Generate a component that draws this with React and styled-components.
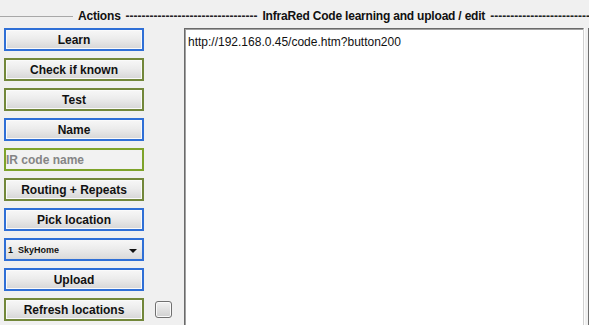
import React from 'react';
import styled, { createGlobalStyle } from 'styled-components';

const GlobalStyle = createGlobalStyle`
    html, body {
        margin: 0;
        padding: 0;
        background: #f0f0f0;
        overflow: hidden;
    }
    body {
        font-family: "Liberation Sans", Arial, sans-serif;
    }
`;

const actions = [
    { label: 'Learn', tone: 'blue' },
    { label: 'Check if known', tone: 'olive' },
    { label: 'Test', tone: 'olive' },
    { label: 'Name', tone: 'blue' },
];

const actions2 = [
    { label: 'Routing + Repeats', tone: 'olive' },
    { label: 'Pick location', tone: 'blue' },
];

const tones = {
    blue: '#2f6fd6',
    olive: '#72873a',
    green: '#7ea32a',
};

function App() {
    return (
        <Page>
            <GlobalStyle />
            <Header>
                <HeadLine />
                <HeadLabel>Actions</HeadLabel>
                <Dashes>{'-'.repeat(33)}</Dashes>
                <HeadLabel>InfraRed Code learning and upload / edit</HeadLabel>
                <Dashes>{'-'.repeat(25)}</Dashes>
            </Header>
            <Body>
                <Sidebar>
                    {actions.map(a => (
                        <Button key={a.label} tone={a.tone}>{a.label}</Button>
                    ))}
                    <NameInput placeholder="IR code name" />
                    {actions2.map(a => (
                        <Button key={a.label} tone={a.tone}>{a.label}</Button>
                    ))}
                    <Select tone="blue">
                        <span>1&nbsp; SkyHome</span>
                        <Arrow />
                    </Select>
                    <Button tone="blue">Upload</Button>
                    <Row>
                        <Button tone="olive">Refresh locations</Button>
                        <CheckBox />
                    </Row>
                </Sidebar>
                <Editor defaultValue="http://192.168.0.45/code.htm?button200" spellCheck={false} />
                <Edge />
            </Body>
        </Page>
    );
}

export default App;

const Page = styled.div`
    width: 589px;
    height: 325px;
    display: flex;
    flex-direction: column;
    overflow: hidden;
`;

const Header = styled.div`
    height: 28px;
    display: flex;
    align-items: center;
    gap: 5px;
    padding-top: 4px;
    box-sizing: border-box;
    white-space: nowrap;
`;

const HeadLine = styled.div`
    width: 73px;
    flex: none;
    border-top: 1px solid #a8a8a8;
`;

const HeadLabel = styled.span`
    flex: none;
    font-size: 12px;
    font-weight: bold;
    color: #111;
    letter-spacing: -0.2px;
`;

const Dashes = styled.span`
    flex: none;
    font-size: 12px;
    font-weight: bold;
    color: #222;
`;

const Body = styled.div`
    flex: 1;
    display: flex;
    min-height: 0;
`;

const Sidebar = styled.div`
    width: 184px;
    flex: none;
    padding-left: 4px;
    box-sizing: border-box;
    display: flex;
    flex-direction: column;
    gap: 7px;
`;

const Button = styled.div`
    width: 140px;
    height: 23px;
    box-sizing: border-box;
    border: 2px solid ${p => tones[p.tone]};
    background: linear-gradient(#f7f7f7, #ececec 45%, #d6d6d6);
    box-shadow: inset 0 0 0 1px #fafafa;
    display: flex;
    align-items: center;
    justify-content: center;
    font-size: 12px;
    font-weight: bold;
    color: #111;
    flex: none;
`;

const NameInput = styled.input`
    width: 140px;
    height: 23px;
    box-sizing: border-box;
    border: 2px solid ${tones.green};
    background: #f2f2f2;
    padding: 0;
    outline: none;
    font-family: "Liberation Sans", Arial, sans-serif;
    font-size: 12px;
    font-weight: bold;
    color: #111;
    flex: none;
    &::placeholder {
        color: #858585;
    }
`;

const Select = styled.div`
    width: 140px;
    height: 23px;
    box-sizing: border-box;
    border: 2px solid ${p => tones[p.tone]};
    background: linear-gradient(#f7f7f7, #ececec 45%, #dadada);
    display: flex;
    align-items: center;
    justify-content: space-between;
    padding: 0 5px 0 2px;
    font-size: 9px;
    font-weight: bold;
    color: #111;
    flex: none;
`;

const Arrow = styled.span`
    width: 0;
    height: 0;
    border-left: 4px solid transparent;
    border-right: 4px solid transparent;
    border-top: 4px solid #111;
    margin-top: 2px;
`;

const Row = styled.div`
    display: flex;
    align-items: center;
    gap: 11px;
`;

const CheckBox = styled.div`
    width: 17px;
    height: 17px;
    box-sizing: border-box;
    border: 1px solid #707070;
    border-radius: 3px;
    background: linear-gradient(#f2f2f2, #d0d0d0);
    box-shadow: inset 0 0 0 1px #fafafa;
`;

const Editor = styled.textarea`
    width: 400px;
    height: 320px;
    flex: none;
    box-sizing: border-box;
    margin: 0;
    border: 1px solid #6a6a6a;
    border-right-color: #d0d0d0;
    border-bottom: none;
    box-shadow: inset 1px 1px 0 #a0a0a0;
    background: #fff;
    resize: none;
    outline: none;
    padding: 6px 3px;
    font-family: "Liberation Sans", Arial, sans-serif;
    font-size: 12px;
    color: #111;
`;

const Edge = styled.div`
    width: 3px;
    flex: none;
    border-left: 1px solid #fdfdfd;
    border-right: 2px solid #6f6f6f;
`;
